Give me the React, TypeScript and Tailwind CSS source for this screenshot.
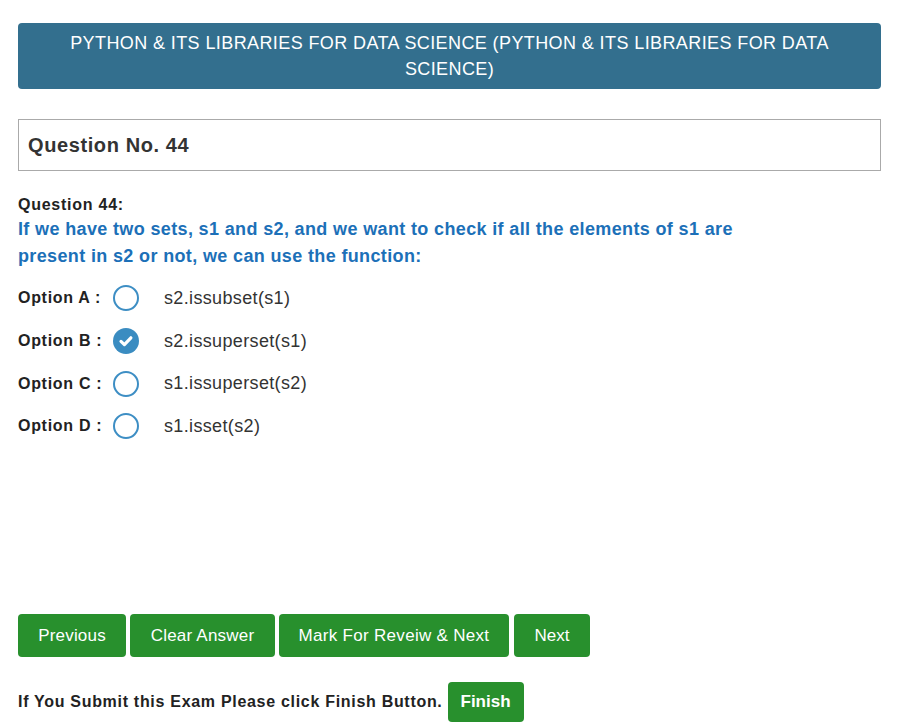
import React from "react";

const options = [
  { label: "Option A :", text: "s2.issubset(s1)", checked: false },
  { label: "Option B :", text: "s2.issuperset(s1)", checked: true },
  { label: "Option C :", text: "s1.issuperset(s2)", checked: false },
  { label: "Option D :", text: "s1.isset(s2)", checked: false },
];

function Radio({ checked }: { checked: boolean }) {
  if (checked) {
    return (
      <span className="flex h-[26px] w-[26px] items-center justify-center rounded-full bg-[#3a8cc1]">
        <svg width="18" height="18" viewBox="0 0 18 18">
          <path d="M4 9.4 L7.4 12.6 L13.9 5.8" fill="none" stroke="#fff" strokeWidth="3.2" strokeLinecap="round" strokeLinejoin="round" />
        </svg>
      </span>
    );
  }
  return <span className="block h-[26px] w-[26px] rounded-full border-2 border-[#3d8ec4] bg-white" />;
}

export default function App() {
  return (
    <div className="min-h-[724px] bg-white px-[18px] pt-[23px] text-[#333]" style={{ fontFamily: '"Liberation Sans", Arial, sans-serif' }}>
      <div className="w-[863px] rounded-[4px] bg-[#336f8e] px-[40px] py-[7px] text-center text-[18px] leading-[26px] tracking-[0.4px] text-white">
        PYTHON &amp; ITS LIBRARIES FOR DATA SCIENCE (PYTHON &amp; ITS LIBRARIES FOR DATA SCIENCE)
      </div>

      <div className="mt-[30px] flex h-[52px] w-[863px] items-center border border-[#aaaaaa] px-[9px]">
        <span className="text-[20px] font-bold tracking-[0.6px] text-[#333]">Question No. 44</span>
      </div>

      <div className="mt-[24px] text-[16px] font-bold leading-[20px] tracking-[0.75px] text-[#222]">Question 44:</div>
      <div className="mt-[1px] w-[750px] text-[18px] font-bold leading-[27px] tracking-[0.36px] text-[#1c70b8]">
        If we have two sets, s1 and s2, and we want to check if all the elements of s1 are present in s2 or not, we can use the function:
      </div>

      <div className="mt-[7px] flex flex-col">
        {options.map((o) => (
          <div key={o.label} className="flex h-[42.7px] items-center">
            <span className="w-[95px] text-[16px] font-bold tracking-[0.7px] text-[#222]">{o.label}</span>
            <Radio checked={o.checked} />
            <span className="ml-[25px] text-[18px] tracking-[0.35px] text-[#333]">{o.text}</span>
          </div>
        ))}
      </div>

      <div className="mt-[166px] flex gap-[4px]">
        <button className="h-[43px] w-[108px] rounded-[4px] bg-[#28902d] text-[17px] tracking-[0.2px] text-white">Previous</button>
        <button className="h-[43px] w-[145px] rounded-[4px] bg-[#28902d] text-[17px] tracking-[0.2px] text-white">Clear Answer</button>
        <button className="h-[43px] w-[230px] rounded-[4px] bg-[#28902d] text-[17px] tracking-[0.3px] text-white">Mark For Reveiw &amp; Next</button>
        <button className="ml-[1px] h-[43px] w-[76px] rounded-[4px] bg-[#28902d] text-[17px] text-white">Next</button>
      </div>

      <div className="mt-[25px] flex items-center">
        <span className="text-[16px] font-bold tracking-[0.7px] text-[#222]">If You Submit this Exam Please click Finish Button.</span>
        <button className="ml-[5px] h-[40px] w-[76px] rounded-[4px] bg-[#28902d] text-[17px] font-bold text-white">Finish</button>
      </div>
    </div>
  );
}
